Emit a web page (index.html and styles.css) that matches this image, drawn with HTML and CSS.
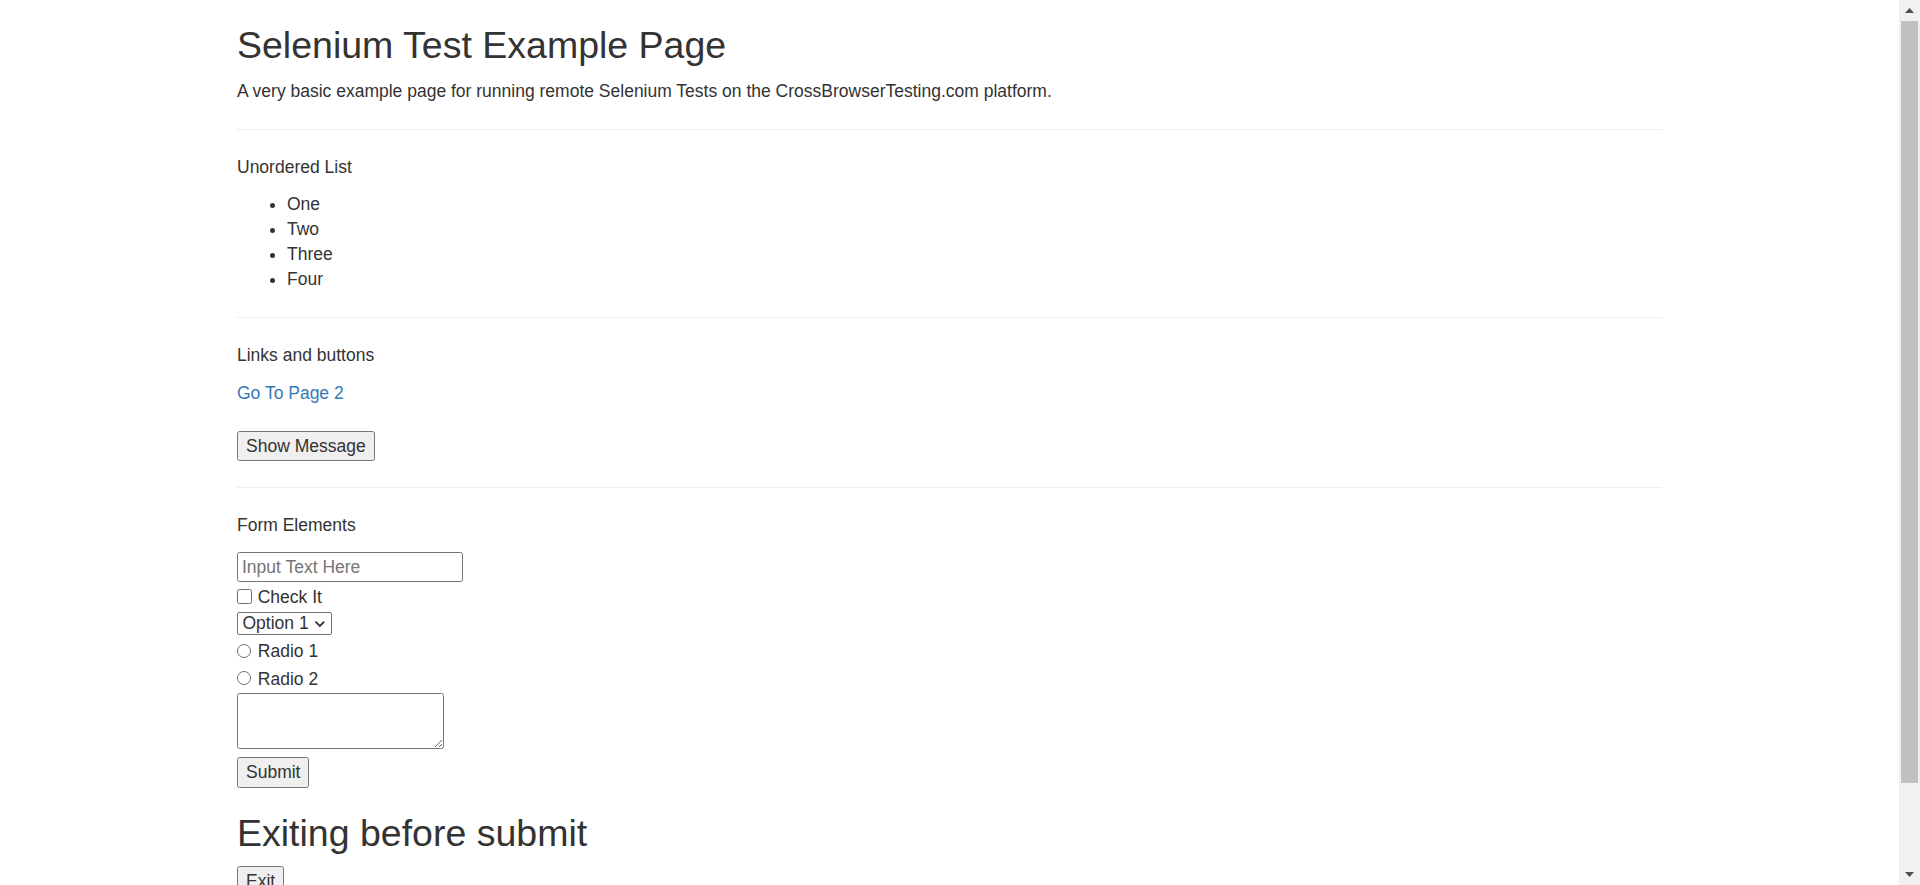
FILE: index.html
```html
<!DOCTYPE html>
<html lang="en">
<head>
<meta charset="utf-8">
<title>Selenium Test Example Page</title>
<link rel="stylesheet" href="styles.css">
</head>
<body>
<div class="viewport">
  <main class="page">
    <div class="container">
      <h1 class="title">Selenium Test Example Page</h1>
      <p>A very basic example page for running remote Selenium Tests on the CrossBrowserTesting.com platform.</p>
      <hr class="rule">
      <p>Unordered List</p>
      <ul class="list">
        <li>One</li>
        <li>Two</li>
        <li>Three</li>
        <li>Four</li>
      </ul>
      <hr class="rule">
      <p>Links and buttons</p>
      <p><a class="link" href="#">Go To Page 2</a></p>
      <div class="btn-row"><button class="btn" type="button">Show Message</button></div>
      <hr class="rule">
      <p>Form Elements</p>
      <form class="form">
        <input class="text-input" type="text" placeholder="Input Text Here">
        <label class="check-row"><input class="check" type="checkbox"><span>Check It</span></label>
        <div class="select"><span>Option 1</span><svg class="chev" width="12" height="8" viewBox="0 0 12 8"><polyline points="1.5,1.5 6,6 10.5,1.5" fill="none" stroke="#333" stroke-width="1.8"/></svg></div>
        <div class="radios">
          <label class="radio-row"><input class="radio" type="radio" name="r"><span>Radio 1</span></label>
          <label class="radio-row"><input class="radio" type="radio" name="r"><span>Radio 2</span></label>
        </div>
        <textarea class="textarea"></textarea>
        <button class="btn submit" type="button">Submit</button>
      </form>
      <h1 class="title exit-title">Exiting before submit</h1>
      <button class="btn" type="button">Exit</button>
    </div>
  </main>
  <aside class="scrollbar">
    <div class="sb-btn"><svg width="9" height="5" viewBox="0 0 9 5"><polygon points="0,5 9,5 4.5,0" fill="#505050"/></svg></div>
    <div class="sb-track"><div class="sb-thumb"></div></div>
    <div class="sb-btn"><svg width="9" height="5" viewBox="0 0 9 5"><polygon points="0,0 9,0 4.5,5" fill="#505050"/></svg></div>
  </aside>
</div>
</body>
</html>
```
FILE: styles.css
```css
html, body {
  margin: 0;
  padding: 0;
  background: #fff;
}

body {
  font-family: "Liberation Sans", Arial, sans-serif;
  font-size: 17.5px;
  line-height: 25px;
  color: #333;
}

.viewport {
  display: flex;
  height: 885px;
  overflow: hidden;
}

.page {
  flex: 1;
  min-width: 0;
}

.container {
  width: 1462.5px;
  box-sizing: border-box;
  margin: 0 auto;
  padding: 0 18.75px;
}

.title {
  font-size: 37.5px;
  line-height: 41.25px;
  font-weight: 400;
  margin: 25px 0 12.5px;
}

p {
  margin: 0 0 12.5px;
}

.rule {
  margin: 25px 0;
  border: 0;
  border-top: 1.25px solid #eee;
  height: 0;
}

.list {
  margin: 0 0 12.5px;
  padding-left: 50px;
}

.link {
  color: #337ab7;
  text-decoration: none;
}

.btn-row {
  margin-top: 25.5px;
  padding-bottom: 0.8px;
  display: flex;
}

.btn {
  font-family: inherit;
  font-size: 17.5px;
  color: #333;
  background: #efefef;
  border: 1px solid #767676;
  border-radius: 2.5px;
  height: 30px;
  line-height: 28px;
  padding: 0 8px;
  margin: 0;
  display: block;
}

.form {
  padding-top: 1.5px;
  display: flex;
  flex-direction: column;
  align-items: flex-start;
}

.text-input {
  box-sizing: border-box;
  width: 226px;
  height: 30px;
  border: 1px solid #767676;
  border-radius: 2.5px;
  padding: 0 4px;
  margin: 0;
  font-family: inherit;
  font-size: 17.5px;
  color: #333;
}

.text-input::placeholder {
  color: #757575;
}

.check-row {
  display: flex;
  align-items: flex-start;
  height: 30px;
  line-height: 30px;
}

.check {
  appearance: none;
  box-sizing: border-box;
  width: 14.5px;
  height: 14.5px;
  border: 1px solid #6f6f6f;
  border-radius: 2.5px;
  margin: 7px 6.2px 0 0;
  background: #fff;
}

.select {
  box-sizing: border-box;
  display: flex;
  align-items: center;
  width: 95px;
  height: 23px;
  border: 1px solid #767676;
  border-radius: 2px;
  padding: 0 5px 0 4.5px;
  line-height: 21px;
  gap: 5.5px;
}

.chev {
  display: block;
  flex: none;
  width: 11.7px;
  margin-top: 1px;
}

.radios {
  padding-top: 1.2px;
}

.radio-row {
  display: flex;
  align-items: flex-start;
  height: 27.6px;
  box-sizing: border-box;
  padding-top: 4.2px;
  line-height: 23.4px;
}

.radio {
  appearance: none;
  box-sizing: border-box;
  width: 14px;
  height: 14px;
  border: 1px solid #6f6f6f;
  border-radius: 50%;
  margin: 3.2px 6.8px 0 0;
  background: #fff;
}

.textarea {
  box-sizing: border-box;
  width: 207px;
  height: 55.6px;
  margin: 1.6px 0 0;
  border: 1px solid #767676;
  border-radius: 2.5px;
  resize: both;
  font-family: inherit;
  font-size: 17.5px;
  display: block;
}

.submit {
  margin-top: 8.4px;
  height: 30.6px;
}

.exit-title {
  margin-top: 25px;
}

.scrollbar {
  width: 21px;
  flex: none;
  background: #f1f1f1;
  display: flex;
  flex-direction: column;
}

.sb-btn {
  height: 21px;
  flex: none;
  display: flex;
  align-items: center;
  justify-content: center;
}

.sb-track {
  flex: 1;
  display: flex;
  flex-direction: column;
}

.sb-thumb {
  height: 761.7px;
  margin: 0 2px;
  background: #c1c1c1;
}
```
